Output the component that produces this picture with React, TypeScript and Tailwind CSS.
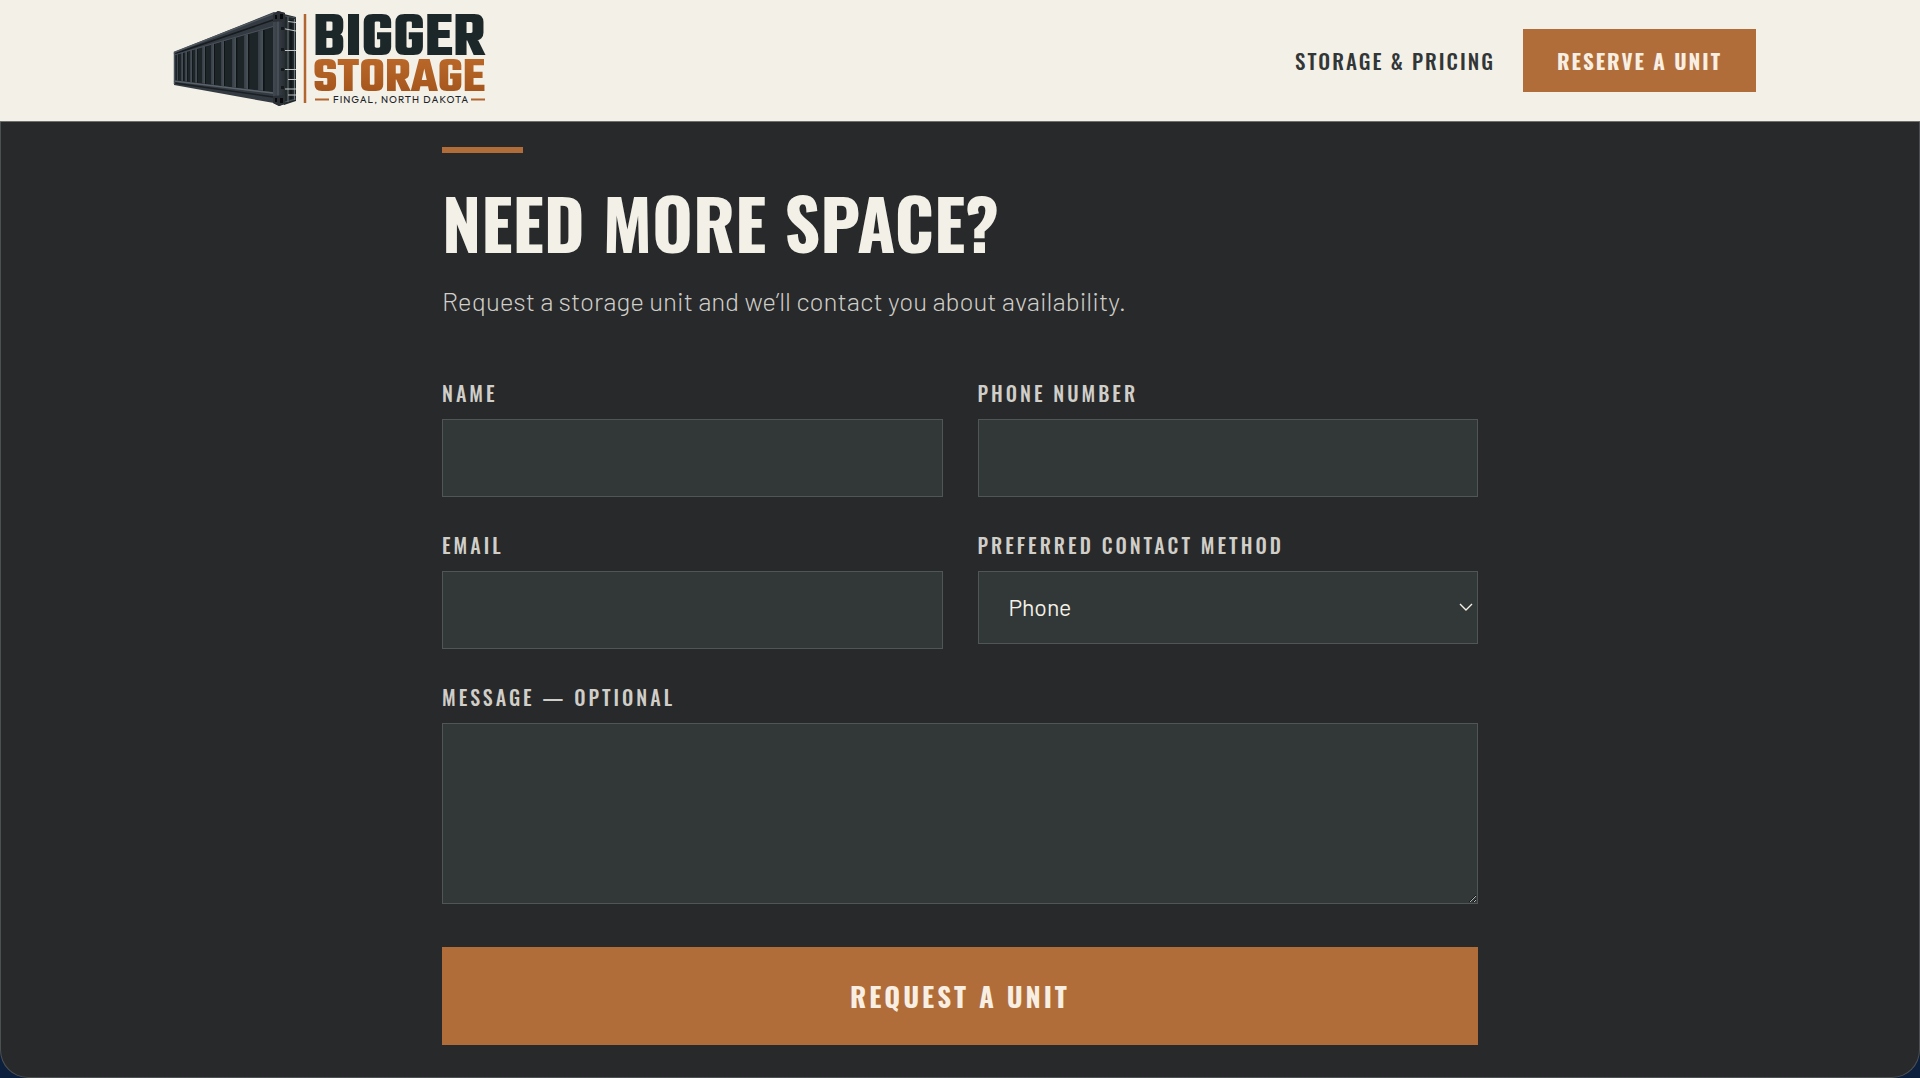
import * as React from 'react';
import { clsx } from 'clsx';

const headingFont = "font-['Oswald','Liberation_Sans_Narrow',sans-serif]";
const bodyFont = "font-['Barlow','Roboto',sans-serif]";

const fieldClass =
  'block w-full rounded-none border border-[#505555] bg-[#323737] px-[30px] text-[23px] text-[#f3f0e7] outline-none focus:border-[#b06d3a]';

// side panel corrugations: [x, width], growing towards the near end
const ribs = [
  [13, 1], [17, 2], [21, 2], [26, 2], [31, 2], [38, 3], [47, 3], [57, 3], [68, 4], [80, 4], [94, 5],
];

const panelTop = (x: number) => 47 - (x - 10) * 0.28;
const panelBottom = (x: number) => 72 + (x - 10) * 0.12;

const Logo: React.FC = () => (
  <svg viewBox="0 0 322 105" className="h-[105px] w-[322px] overflow-visible" role="img" aria-label="Bigger Storage, Fingal, North Dakota">
    <defs>
      <linearGradient id="rust" x1="0" y1="0" x2="0" y2="1">
        <stop offset="0" stopColor="#c4702f" />
        <stop offset="1" stopColor="#974a14" />
      </linearGradient>
      <linearGradient id="post" x1="0" y1="0" x2="1" y2="0">
        <stop offset="0" stopColor="#424951" />
        <stop offset="1" stopColor="#272d33" />
      </linearGradient>
      <linearGradient id="rib" x1="0" y1="0" x2="1" y2="0">
        <stop offset="0" stopColor="#363d44" />
        <stop offset="1" stopColor="#4a525a" />
      </linearGradient>
    </defs>

    {/* body */}
    <path d="M10 44 L110 4 L121 8 V96 L110 95 L10 77 Z" fill="#343a41" />
    <path d="M11 47 L109 19 V84 L11 73 Z" fill="#1e2529" />
    {ribs.map(([x, w]) => (
      <g key={x}>
        <path d={`M${x} ${panelTop(x)} L${x + w} ${panelTop(x + w)} V${panelBottom(x + w)} L${x} ${panelBottom(x)} Z`} fill="url(#rib)" />
        <path d={`M${x + w} ${panelTop(x + w)} h${w / 3} V${panelBottom(x + w)} h-${w / 3} Z`} fill="#0f1417" />
      </g>
    ))}
    <path d="M10 46 L109 12" stroke="#161b1f" strokeWidth="1.5" />
    <path d="M10 44.5 L110 5.5" stroke="#4e565e" strokeWidth="1.5" />
    <path d="M10 47 L109 18.5" stroke="#4a5159" strokeWidth="1" />
    <path d="M10 73 L109 85" stroke="#5a626a" strokeWidth="1.5" />
    <path d="M10 75 L109 89" stroke="#1a1f23" strokeWidth="1.5" />
    <path d="M10.5 44 V76" stroke="#4a525a" strokeWidth="1.5" />

    {/* door end */}
    <path d="M120 6 L132 9 V93 L120 97 Z" fill="#22292c" />
    <path d="M121 8 L132 10 M121 94 L132 91" stroke="#4a5157" strokeWidth="1" />
    <path d="M127 12 V91" stroke="#12181a" strokeWidth="3" />
    <path d="M124 9 V94 M130.5 11 V92" stroke="#6b7276" strokeWidth="1" />
    <path
      d="M124 13.5 L132 14.5 M119 20.5 L132 23 M118 42.5 H132 M118 61.5 H132 M124 71.5 H132 M121 81 H132 M124 87 H132"
      stroke="#c2c5c3"
      strokeWidth="1"
    />

    {/* corner post and castings */}
    <path d="M109 6 L114 3 L121 5 V96 L115 98 L109 95 Z" fill="url(#post)" />
    <path d="M114 12 V90" stroke="#565e66" strokeWidth="1" />
    <path d="M109 6 L114 3 L121 5 V13 L109 14 Z M109 88 L121 87 V96 L115 98 L109 95 Z" fill="#2a3036" />
    <path d="M111 7 h2 v4 h-2 Z M116 6 h3 v5 h-3 Z M111 90 h2 v4 h-2 Z M116 90 h3 v5 h-3 Z" fill="#07090a" />
    <path d="M117 19 h3 v3 h-3 Z M117 40 h3 v3 h-3 Z M117 60 h3 v3 h-3 Z M117 78 h3 v3 h-3 Z" fill="#14191c" />

    <path d="M141 6 V95" stroke="#b1652f" strokeWidth="2.5" />

    <g className="font-['Teko','Liberation_Sans_Narrow',sans-serif] font-bold">
      <text x="149" y="47" fontSize="63" fill="#1c272a">BIGGER</text>
      <text x="149" y="83" fontSize="50" fill="url(#rust)">STORAGE</text>
    </g>
    <path d="M151 91.5 H165 M307 91.5 H321" stroke="#b1652f" strokeWidth="2" />
    <text x="169" y="95" fontSize="10" className="font-['Outfit','Lato',sans-serif] tracking-[1px]" fill="#1c2427">FINGAL, NORTH DAKOTA</text>
  </svg>
);

interface FieldProps {
  id: string;
  label: string;
  children: React.ReactNode;
}

const Field: React.FC<FieldProps> = ({ id, label, children }) => (
  <div>
    <label
      htmlFor={id}
      className={clsx(headingFont, 'mb-2.5 block text-xl leading-8 font-medium tracking-[3px] uppercase text-[#d0cec8]')}
    >
      {label}
    </label>
    {children}
  </div>
);

export default function App() {
  return (
    <div className={clsx(bodyFont, 'flex min-h-screen flex-col bg-[#0c1f3c]')}>
      <header className="border-b border-[#6d706d] bg-[#f3f0e7]">
        <div className="mx-auto flex h-[121px] max-w-[1592px] items-center justify-between">
          <a href="#top">
            <Logo />
          </a>
          <nav className={clsx(headingFont, 'flex items-center gap-7 text-[21px] tracking-[2px] uppercase')}>
            <a href="#pricing" className="font-medium text-[#323637]">
              Storage &amp; Pricing
            </a>
            <a href="#reserve" className="flex h-[63px] items-center bg-[#b06d3a] px-[34px] font-bold text-[#f8efe2]">
              Reserve a Unit
            </a>
          </nav>
        </div>
      </header>

      <main className="flex-1 rounded-b-[28px] border border-t-0 border-[#4d5052] bg-[#28292b] pt-[25px] pb-8">
        <div className="mx-auto max-w-[1036px]">
          <div className="h-[6px] w-[81px] bg-[#b06d3a]" />
          <h1 className={clsx(headingFont, 'mt-7 text-[70px] leading-[80px] font-bold uppercase text-[#f3f0e7]')}>
            Need more space?
          </h1>
          <p className="mt-5 text-[26px] leading-10 font-light text-[#cfcec9]">
            Request a storage unit and we’ll contact you about availability.
          </p>

          <form className="mt-14" onSubmit={(e) => e.preventDefault()}>
            <div className="grid grid-cols-2 gap-x-[35px] gap-y-8">
              <Field id="name" label="Name">
                <input id="name" type="text" className={clsx(fieldClass, 'h-[78px]')} />
              </Field>
              <Field id="phone" label="Phone number">
                <input id="phone" type="tel" className={clsx(fieldClass, 'h-[78px]')} />
              </Field>
              <Field id="email" label="Email">
                <input id="email" type="email" className={clsx(fieldClass, 'h-[78px]')} />
              </Field>
              <Field id="method" label="Preferred contact method">
                <div className="relative">
                  <select id="method" defaultValue="Phone" className={clsx(fieldClass, 'h-[73px] appearance-none')}>
                    <option>Phone</option>
                    <option>Email</option>
                    <option>Text</option>
                  </select>
                  <svg
                    viewBox="0 0 14 8"
                    className="pointer-events-none absolute top-8 right-[5px] h-2 w-[14px]"
                    fill="none"
                    stroke="#f3f0e7"
                    strokeWidth="1.4"
                  >
                    <path d="M1 1 L7 7 L13 1" />
                  </svg>
                </div>
              </Field>
              <div className="col-span-2">
                <Field id="message" label="Message — optional">
                  <textarea id="message" className={clsx(fieldClass, 'h-[181px] resize-y py-5')} />
                </Field>
              </div>
            </div>
            <button
              type="submit"
              className={clsx(
                headingFont,
                'mt-[43px] h-[98px] w-full bg-[#b06d3a] text-[27px] font-bold tracking-[3px] uppercase text-[#f8efe2]'
              )}
            >
              Request a unit
            </button>
          </form>
        </div>
      </main>
    </div>
  );
}
